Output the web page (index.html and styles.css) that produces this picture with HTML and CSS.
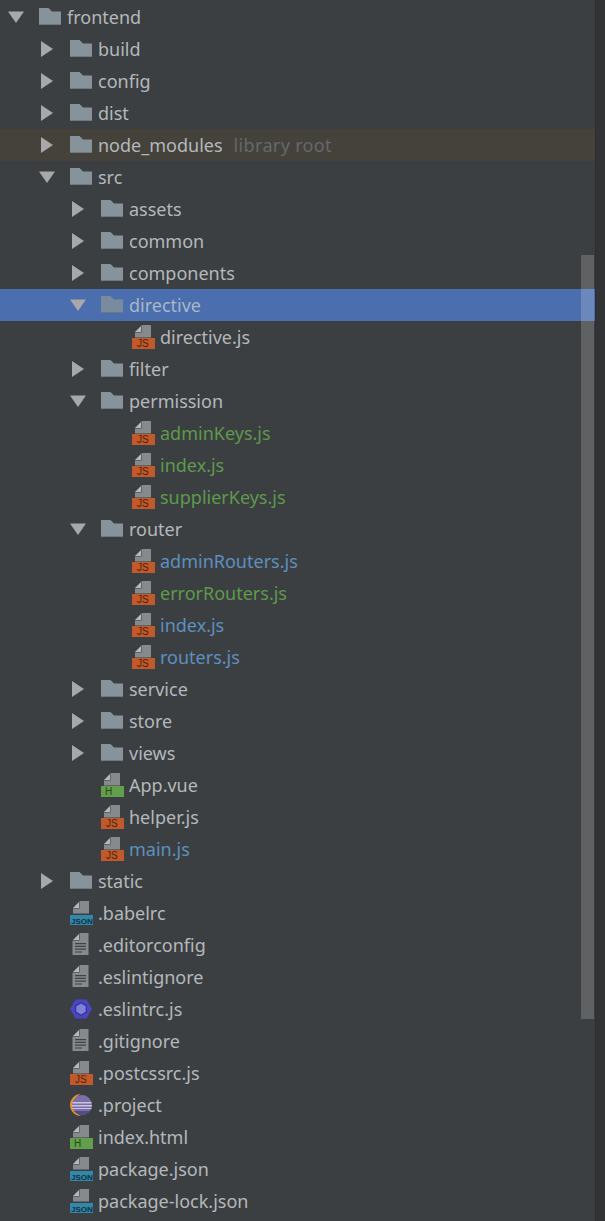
FILE: index.html
```html
<!DOCTYPE html>
<html lang="en">
<head>
<meta charset="utf-8">
<title>Project tree</title>
<link rel="stylesheet" href="styles.css">
</head>
<body>
<svg class="defs" width="0" height="0" aria-hidden="true">
  <symbol id="open" viewBox="0 0 16 16"><path d="M0 2.500H16L8 14Z" fill="#a8a8a8"/></symbol>
  <symbol id="closed" viewBox="0 0 16 16"><path d="M2 0V16L14 8Z" fill="#a8a8a8"/></symbol>
  <symbol id="folder" viewBox="0 0 23 24">
    <path d="M0 3H9.500L13 6.500H22V20H0Z" fill="#87939a"/>
    <path d="M0 19H22V20H0Z" fill="#6e7a80"/>
  </symbol>
  <symbol id="doc" viewBox="0 0 23 24">
    <path d="M9.500 0H19V12.500H3V7.500H9.500Z" fill="#868a8c"/>
    <path d="M9 1V7H3Z" fill="#b6b8ba"/>
  </symbol>
  <symbol id="text" viewBox="0 0 23 24">
    <path d="M9.500 0H18.500V22H2.500V7.500H9.500Z" fill="#868a8c"/>
    <path d="M9 1V7H3Z" fill="#b6b8ba"/>
    <path d="M5 10H16V11.200H5ZM5 12.800H16V14H5ZM5 15.600H16V16.800H5ZM5 18.400H12V19.600H5Z" fill="#3f4346"/>
  </symbol>
  <symbol id="eslint" viewBox="0 0 23 24">
    <path d="M5.500 2.500H16.500L22 12L16.500 21.500H5.500L0 12Z" fill="#4846c4"/>
    <path d="M11 5L17 8.500V15.500L11 19L5 15.500V8.500Z" fill="#34368c"/>
    <path d="M11 6.500L15.700 9.200V14.800L11 17.500L6.300 14.800V9.200Z" fill="#8080dc"/>
  </symbol>
  <symbol id="eclipse" viewBox="0 0 23 24">
    <path d="M11 1A11 11 0 0 0 11 23A12 12 0 0 1 11 1Z" fill="#e8912c"/>
    <circle cx="12" cy="12" r="10" fill="#7a6fa8"/>
    <path d="M2.500 9H21.500V10.500H2.500ZM2 12H22V13.500H2ZM2.500 15H21.500V16H2.500Z" fill="#c8c4dc"/>
    <path d="M4 18H20A10 10 0 0 1 4 18Z" fill="#544c86"/>
  </symbol>
</svg>

<div class="window">
  <main class="panel">
    <ul class="tree">
      <li class="row d0"><svg class="arrow"><use href="#open"/></svg><svg class="icon"><use href="#folder"/></svg><span class="name">frontend</span></li>
      <li class="row d1"><svg class="arrow"><use href="#closed"/></svg><svg class="icon"><use href="#folder"/></svg><span class="name">build</span></li>
      <li class="row d1"><svg class="arrow"><use href="#closed"/></svg><svg class="icon"><use href="#folder"/></svg><span class="name">config</span></li>
      <li class="row d1"><svg class="arrow"><use href="#closed"/></svg><svg class="icon"><use href="#folder"/></svg><span class="name">dist</span></li>
      <li class="row d1 excluded"><svg class="arrow"><use href="#closed"/></svg><svg class="icon"><use href="#folder"/></svg><span class="name">node_modules</span><span class="hint">library root</span></li>
      <li class="row d1"><svg class="arrow"><use href="#open"/></svg><svg class="icon"><use href="#folder"/></svg><span class="name">src</span></li>
      <li class="row d2"><svg class="arrow"><use href="#closed"/></svg><svg class="icon"><use href="#folder"/></svg><span class="name">assets</span></li>
      <li class="row d2"><svg class="arrow"><use href="#closed"/></svg><svg class="icon"><use href="#folder"/></svg><span class="name">common</span></li>
      <li class="row d2"><svg class="arrow"><use href="#closed"/></svg><svg class="icon"><use href="#folder"/></svg><span class="name">components</span></li>
      <li class="row d2 selected"><svg class="arrow"><use href="#open"/></svg><svg class="icon"><use href="#folder"/></svg><span class="name">directive</span></li>
      <li class="row d3"><svg class="arrow"></svg><svg class="icon" viewBox="0 0 23 24"><use href="#doc"/><rect class="band-js" y="13" width="23" height="11"/><text class="badge ink-js" x="5" y="22">JS</text></svg><span class="name">directive.js</span></li>
      <li class="row d2"><svg class="arrow"><use href="#closed"/></svg><svg class="icon"><use href="#folder"/></svg><span class="name">filter</span></li>
      <li class="row d2"><svg class="arrow"><use href="#open"/></svg><svg class="icon"><use href="#folder"/></svg><span class="name">permission</span></li>
      <li class="row d3"><svg class="arrow"></svg><svg class="icon" viewBox="0 0 23 24"><use href="#doc"/><rect class="band-js" y="13" width="23" height="11"/><text class="badge ink-js" x="5" y="22">JS</text></svg><span class="name added">adminKeys.js</span></li>
      <li class="row d3"><svg class="arrow"></svg><svg class="icon" viewBox="0 0 23 24"><use href="#doc"/><rect class="band-js" y="13" width="23" height="11"/><text class="badge ink-js" x="5" y="22">JS</text></svg><span class="name added">index.js</span></li>
      <li class="row d3"><svg class="arrow"></svg><svg class="icon" viewBox="0 0 23 24"><use href="#doc"/><rect class="band-js" y="13" width="23" height="11"/><text class="badge ink-js" x="5" y="22">JS</text></svg><span class="name added">supplierKeys.js</span></li>
      <li class="row d2"><svg class="arrow"><use href="#open"/></svg><svg class="icon"><use href="#folder"/></svg><span class="name">router</span></li>
      <li class="row d3"><svg class="arrow"></svg><svg class="icon" viewBox="0 0 23 24"><use href="#doc"/><rect class="band-js" y="13" width="23" height="11"/><text class="badge ink-js" x="5" y="22">JS</text></svg><span class="name modified">adminRouters.js</span></li>
      <li class="row d3"><svg class="arrow"></svg><svg class="icon" viewBox="0 0 23 24"><use href="#doc"/><rect class="band-js" y="13" width="23" height="11"/><text class="badge ink-js" x="5" y="22">JS</text></svg><span class="name added">errorRouters.js</span></li>
      <li class="row d3"><svg class="arrow"></svg><svg class="icon" viewBox="0 0 23 24"><use href="#doc"/><rect class="band-js" y="13" width="23" height="11"/><text class="badge ink-js" x="5" y="22">JS</text></svg><span class="name modified">index.js</span></li>
      <li class="row d3"><svg class="arrow"></svg><svg class="icon" viewBox="0 0 23 24"><use href="#doc"/><rect class="band-js" y="13" width="23" height="11"/><text class="badge ink-js" x="5" y="22">JS</text></svg><span class="name modified">routers.js</span></li>
      <li class="row d2"><svg class="arrow"><use href="#closed"/></svg><svg class="icon"><use href="#folder"/></svg><span class="name">service</span></li>
      <li class="row d2"><svg class="arrow"><use href="#closed"/></svg><svg class="icon"><use href="#folder"/></svg><span class="name">store</span></li>
      <li class="row d2"><svg class="arrow"><use href="#closed"/></svg><svg class="icon"><use href="#folder"/></svg><span class="name">views</span></li>
      <li class="row d2"><svg class="arrow"></svg><svg class="icon" viewBox="0 0 23 24"><use href="#doc"/><rect class="band-html" y="13" width="23" height="11"/><text class="badge ink-html" x="4" y="22">H</text></svg><span class="name">App.vue</span></li>
      <li class="row d2"><svg class="arrow"></svg><svg class="icon" viewBox="0 0 23 24"><use href="#doc"/><rect class="band-js" y="13" width="23" height="11"/><text class="badge ink-js" x="5" y="22">JS</text></svg><span class="name">helper.js</span></li>
      <li class="row d2"><svg class="arrow"></svg><svg class="icon" viewBox="0 0 23 24"><use href="#doc"/><rect class="band-js" y="13" width="23" height="11"/><text class="badge ink-js" x="5" y="22">JS</text></svg><span class="name modified">main.js</span></li>
      <li class="row d1"><svg class="arrow"><use href="#closed"/></svg><svg class="icon"><use href="#folder"/></svg><span class="name">static</span></li>
      <li class="row d1"><svg class="arrow"></svg><svg class="icon" viewBox="0 0 23 24"><use href="#doc"/><rect class="band-json" y="14" width="23" height="10"/><text class="badge badge-json ink-json" x="1" y="23">JSON</text></svg><span class="name">.babelrc</span></li>
      <li class="row d1"><svg class="arrow"></svg><svg class="icon"><use href="#text"/></svg><span class="name">.editorconfig</span></li>
      <li class="row d1"><svg class="arrow"></svg><svg class="icon"><use href="#text"/></svg><span class="name">.eslintignore</span></li>
      <li class="row d1"><svg class="arrow"></svg><svg class="icon"><use href="#eslint"/></svg><span class="name">.eslintrc.js</span></li>
      <li class="row d1"><svg class="arrow"></svg><svg class="icon"><use href="#text"/></svg><span class="name">.gitignore</span></li>
      <li class="row d1"><svg class="arrow"></svg><svg class="icon" viewBox="0 0 23 24"><use href="#doc"/><rect class="band-js" y="13" width="23" height="11"/><text class="badge ink-js" x="5" y="22">JS</text></svg><span class="name">.postcssrc.js</span></li>
      <li class="row d1"><svg class="arrow"></svg><svg class="icon"><use href="#eclipse"/></svg><span class="name">.project</span></li>
      <li class="row d1"><svg class="arrow"></svg><svg class="icon" viewBox="0 0 23 24"><use href="#doc"/><rect class="band-html" y="13" width="23" height="11"/><text class="badge ink-html" x="4" y="22">H</text></svg><span class="name">index.html</span></li>
      <li class="row d1"><svg class="arrow"></svg><svg class="icon" viewBox="0 0 23 24"><use href="#doc"/><rect class="band-json" y="14" width="23" height="10"/><text class="badge badge-json ink-json" x="1" y="23">JSON</text></svg><span class="name">package.json</span></li>
      <li class="row d1"><svg class="arrow"></svg><svg class="icon" viewBox="0 0 23 24"><use href="#doc"/><rect class="band-json" y="14" width="23" height="10"/><text class="badge badge-json ink-json" x="1" y="23">JSON</text></svg><span class="name">package-lock.json</span></li>
    </ul>
    <div class="thumb"></div>
  </main>
  <aside class="strip"></aside>
</div>
</body>
</html>
```

FILE: styles.css
```css
* {
  box-sizing: border-box;
}

html,
body {
  margin: 0;
  height: 100%;
}

body {
  overflow: hidden;
  background: #3c3f41;
}

.defs {
  display: block;
  height: 0;
}

.window {
  display: flex;
  height: 1221px;
}

.panel {
  position: relative;
  flex: 0 0 595px;
  background: #3c3f41;
  overflow: hidden;
}

.strip {
  flex: 1;
  background: #313335;
  border-left: 1px solid #2b2d2e;
}

.tree {
  list-style: none;
  margin: 0;
  padding: 1px 0 0;
  font: 18px/32px "Noto Sans", sans-serif;
  color: #b3b8bc;
}

.row {
  display: flex;
  align-items: center;
  height: 32px;
  white-space: nowrap;
}

.d0 { padding-left: 8px; }
.d1 { padding-left: 39px; }
.d2 { padding-left: 70px; }
.d3 { padding-left: 101px; }

.arrow {
  flex: 0 0 16px;
  width: 16px;
  height: 16px;
  margin-right: 15px;
}

.icon {
  flex: 0 0 23px;
  width: 23px;
  height: 24px;
  margin-right: 5px;
}

.excluded {
  background: #45423c;
}

.selected {
  background: #4b6eaf;
}

.selected .name {
  color: #a9b7c6;
}

.selected .icon {
  opacity: 0.8;
}

.hint {
  margin-left: 11px;
  letter-spacing: 0.35px;
  color: #64686a;
}

.added {
  color: #5c9a4c;
}

.modified {
  color: #5d8fc0;
}

.band-js {
  fill: #c2592a;
}

.band-html {
  fill: #629f4c;
}

.band-json {
  fill: #3388aa;
}

.badge {
  font: 400 10px "Liberation Sans", sans-serif;
}

.badge-json {
  font-size: 8px;
  font-weight: 700;
}

.ink-js {
  fill: #4a2410;
}

.ink-html {
  fill: #25451a;
}

.ink-json {
  fill: #0f2f40;
}

.thumb {
  position: absolute;
  top: 255px;
  left: 581px;
  width: 13px;
  height: 764px;
  background: rgba(255, 255, 255, 0.18);
}
```
